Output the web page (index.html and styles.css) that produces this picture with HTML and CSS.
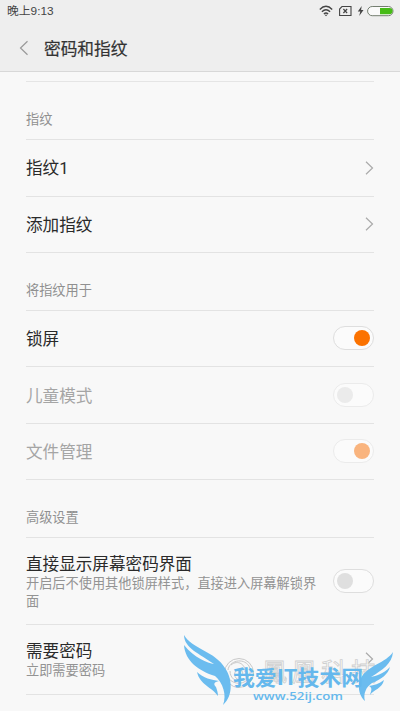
FILE: index.html
```html
<!DOCTYPE html>
<html lang="zh-CN">
<head>
<meta charset="utf-8">
<title>密码和指纹</title>
<link rel="stylesheet" href="styles.css">
</head>
<body>
<header class="header">
  <div class="status">
    <span>晚上9:13</span>
    <svg class="status-icons" width="78" height="14" viewBox="0 0 78 14" fill="none">
      <g stroke="#444" stroke-width="1.4">
        <path d="M.8 5.4Q7-.9 13.2 5.4M2.9 7.7Q7 3.8 11.1 7.7M4.9 9.9Q7 7.9 9.1 9.9"/>
        <path d="M23 2.5H32V11.5H20.6V5Z" stroke-width="1.1"/>
        <path d="M24.4 5l3.7 4M28.1 5l-3.7 4" stroke-width="1.2"/>
      </g>
      <path d="M5.6 10.8h2.8L7 12.3Z" fill="#444"/>
      <path d="M42.7 2L38.8 7.5h2.5L40.2 12l4.3-6h-2.4Z" fill="#444"/>
      <rect x="48.6" y="2.5" width="25.4" height="9.2" rx="4.6" fill="#fafafa" stroke="#747e70" stroke-width="1"/>
      <path d="M61 4h9.5a3.1 3.1 0 0 1 0 6.200H61Z" fill="#46bb16"/>
    </svg>
  </div>
  <div class="titlebar">
    <svg width="10" height="16" viewBox="0 0 10 16"><path d="M8.500 1.200L1.500 8l7 6.800" fill="none" stroke="#999" stroke-width="1.200"/></svg>
    <h1>密码和指纹</h1>
  </div>
</header>
<main class="list">
  <div class="spacer"></div>
  <h2 class="section">指纹</h2>
  <div class="row"><span>指纹<span class="digit">1</span></span><svg class="arrow" viewBox="0 0 9 14"><path d="M1 .8L7.500 7 1 13.200"/></svg></div>
  <div class="row short"><span>添加指纹</span><svg class="arrow" viewBox="0 0 9 14"><path d="M1 .8L7.500 7 1 13.200"/></svg></div>
  <h2 class="section">将指纹用于</h2>
  <div class="row short"><span>锁屏</span><i class="switch on"></i></div>
  <div class="row disabled"><span>儿童模式</span><i class="switch"></i></div>
  <div class="row short disabled"><span>文件管理</span><i class="switch on"></i></div>
  <h2 class="section">高级设置</h2>
  <div class="row unlock"><div class="copy"><span>直接显示屏幕密码界面</span><p>开启后不使用其他锁屏样式，直接进入屏幕解锁界面</p></div><i class="switch"></i></div>
  <div class="row require"><div class="copy"><span>需要密码</span><p>立即需要密码</p></div><svg class="arrow" viewBox="0 0 9 14"><path d="M1 .8L7.500 7 1 13.200"/></svg></div>
</main>
<svg class="watermark" width="230" height="91" viewBox="0 0 230 91">
  <g fill="none" stroke="#c9c9c9" stroke-width="1">
    <circle cx="69" cy="53" r="14.500"/>
    <path d="M58 50c1-9 15-13 21-4 4 8-2 15-9 14-7-1-7-10-1-10 4 0 5 4 2 5M61 45c7-6 15 0 14 7M57 55c3 9 15 11 21 4M60 51c0 7 6 12 12 9"/>
  </g>
  <text class="brand" x="92" y="61" textLength="114">鳳凰科技</text>
  <g fill="#6bbcef">
    <path d="M14 15C21 28 46 32 55 48C62 58 64 75 53 85C57 75 53 63 45 56C29 51 15 41 14 25C24 38 38 43 44 44C30 34 14 28 14 15Z"/>
    <path d="M27 52C33 58 42 60 49 61C44 62 43 64 46 67C47 70 48 73 48 76C42 67 30 65 27 52Z"/>
    <path d="M223 32C216 43 198 45 191 58C186 68 191 78 195 81C193 74 196 67 202 63C212 59 218 54 220 47C213 54 206 56 201 57C212 50 222 44 223 32Z"/>
    <path d="M214 60C209 64 204 65 199 66C203 68 201 71 200 75C204 69 212 69 214 60Z"/>
  </g>
  <text class="site" x="63" y="65" textLength="130" lengthAdjust="spacingAndGlyphs">我爱IT技术网</text>
  <text class="url" x="83" y="80" textLength="90" lengthAdjust="spacingAndGlyphs">www.52ij.com</text>
</svg>
</body>
</html>
```
FILE: styles.css
```css
* { box-sizing: border-box; }
body {
  margin: 0;
  height: 711px;
  overflow: hidden;
  position: relative;
  background: #f8f8f8;
  color: #2a2a2a;
  font: 16.6px/24px "Noto Sans CJK SC", sans-serif;
}
h1, h2, p { margin: 0; font-weight: 400; }
.header {
  height: 72px;
  background: #eee;
  border-bottom: 1px solid #d8d8d8;
}
.status {
  height: 22px;
  padding: 0 3px 0 7px;
  display: flex;
  align-items: center;
  justify-content: space-between;
  color: #444;
  font: 11.8px/22px "Liberation Sans", "Noto Sans CJK SC", sans-serif;
}
.titlebar {
  height: 51px;
  padding-left: 19px;
  display: flex;
  align-items: center;
  gap: 15px;
}
h1 {
  font-size: 16.7px;
  line-height: 24px;
  color: #333;
  -webkit-text-stroke: .2px #333;
}
.list { padding: 0 26px; }
.spacer { height: 10px; border-bottom: 1px solid #e5e5e5; }
.section {
  height: 58px;
  padding-top: 17px;
  border-bottom: 1px solid #e3e3e3;
  font-size: 13.2px;
  line-height: 40px;
  color: #909090;
}
.row {
  height: 57px;
  padding-bottom: 1px;
  border-bottom: 1px solid #e3e3e3;
  display: flex;
  align-items: center;
  justify-content: space-between;
}
.row.short { height: 56px; }
.row.unlock { height: 87px; }
.row.require { height: 70px; }
.digit { font-family: Roboto, sans-serif; }
.disabled > span { color: #a5a5a5; }
.arrow { width: 9px; height: 14px; fill: none; stroke: #aaa; stroke-width: 1.2; }
.switch {
  width: 41px;
  height: 24px;
  border: 1px solid #dedede;
  border-radius: 12px;
  background: #fbfbfb;
  padding: 3px;
  display: flex;
}
.switch::before {
  content: "";
  width: 16px;
  height: 16px;
  border-radius: 50%;
  background: #dfdfdf;
}
.switch.on { justify-content: flex-end; }
.switch.on::before { background: #fb7200; }
.disabled .switch { border-color: #ebebeb; }
.disabled .switch::before { background: #ebebeb; }
.disabled .switch.on::before { background: #f9b47e; }
.copy { width: 294px; }
.copy span { display: block; line-height: 22px; }
.copy p { font-size: 13.2px; line-height: 18px; color: #939393; }
.watermark { position: absolute; left: 170px; top: 620px; }
.brand {
  font: 400 25px "Noto Sans CJK TC", sans-serif;
  fill: #fafafa;
  stroke: #cfcfcf;
  stroke-width: .8px;
}
.site { font: 700 21px "Noto Sans CJK SC", sans-serif; fill: #65b8ed; }
.url { font: 600 11.5px "Open Sans", sans-serif; fill: #65b8ed; }
```
